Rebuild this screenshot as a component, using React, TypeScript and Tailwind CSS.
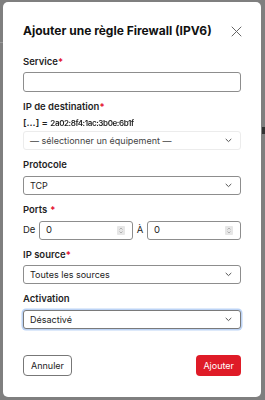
import React from "react";

const font = { fontFamily: "Inter, 'Noto Sans', sans-serif" };

function Chevron() {
  return (
    <svg width="7" height="5" viewBox="0 0 7 5" className="shrink-0">
      <path d="M1 1.2 L3.5 3.6 L6 1.2" fill="none" stroke="#555" strokeWidth="1" strokeLinecap="round" strokeLinejoin="round" />
    </svg>
  );
}

function Spinner() {
  return (
    <div className="w-[8px] h-[9px] rounded-[1px] bg-[#e6e6e6] flex flex-col items-center justify-center gap-[1px]">
      <svg width="4" height="3" viewBox="0 0 4 3">
        <path d="M0.5 2.5 L2 1 L3.5 2.5" fill="none" stroke="#999" strokeWidth="0.7" />
      </svg>
      <svg width="4" height="3" viewBox="0 0 4 3">
        <path d="M0.5 0.5 L2 2 L3.5 0.5" fill="none" stroke="#999" strokeWidth="0.7" />
      </svg>
    </div>
  );
}

function Label({ children, req, space }: { children: React.ReactNode; req?: boolean; space?: boolean }) {
  return (
    <div className="text-[9.5px] leading-[16px] font-semibold text-[#1f1f1f] h-[16px]">
      {children}
      {req && <span className={"text-[#e3001b] " + (space ? "ml-[3px]" : "")}>*</span>}
    </div>
  );
}

function Select({ text, variant }: { text: string; variant?: "disabled" | "focus" }) {
  const cls =
    variant === "disabled"
      ? "border-[#ececec] text-[#444]"
      : variant === "focus"
      ? "border-[#7a7a7a] shadow-[0_0_0_1.5px_#bcd3f5] text-[#222]"
      : "border-[#8d8d8d] text-[#222]";
  return (
    <div className={"h-[19px] rounded-[3px] border bg-white flex items-center justify-between pl-[6px] pr-[8px] text-[9px] " + cls}>
      <span>{text}</span>
      <Chevron />
    </div>
  );
}

export default function App() {
  return (
    <div className="w-[265px] h-[400px] bg-[#7f7f7f] relative overflow-hidden" style={font}>
      <div className="absolute left-0 top-[42px] w-[3px] h-[1px] bg-[#9a9a9a]" />
      <div className="absolute right-0 top-[127px] w-[3px] h-[7px] bg-[#333]" />
      <div className="absolute left-[3px] top-[2px] w-[258px] h-[395px] bg-white rounded-[5px] px-5 pt-5 pb-[21px] flex flex-col">
        <div className="flex items-center justify-between h-[18px]">
          <div className="text-[12px] font-bold text-[#111] leading-[18px]">Ajouter une règle Firewall (IPV6)</div>
          <svg width="11" height="11" viewBox="0 0 11 11" className="mr-[-1px]">
            <path d="M1 1 L10 10 M10 1 L1 10" stroke="#666" strokeWidth="1" strokeLinecap="round" />
          </svg>
        </div>

        <div className="mt-[14px]">
          <Label req>Service</Label>
          <div className="mt-[2px] h-[20px] rounded-[3px] border border-[#8d8d8d] bg-white" />
        </div>

        <div className="mt-[7px]">
          <Label req>IP de destination</Label>
          <div className="h-[16px] text-[9.5px] leading-[16px] font-semibold text-[#1f1f1f] flex items-center">
            <span>[...] =&nbsp;</span>
            <span className="blur-[0.6px] text-[8px] tracking-[-0.4px]">2a02:8f4:1ac:3b0e:6b1f</span>
          </div>
          <Select text="— sélectionner un équipement —" variant="disabled" />
        </div>

        <div className="mt-[7px]">
          <Label>Protocole</Label>
          <div className="mt-[3px]">
            <Select text="TCP" />
          </div>
        </div>

        <div className="mt-[7px]">
          <Label req space>Ports</Label>
          <div className="mt-[3px] flex items-center text-[9.5px] text-[#222]">
            <span className="w-[16px]">De</span>
            <div className="flex-1 h-[19px] rounded-[3px] border border-[#8d8d8d] flex items-center justify-between pl-[6px] pr-[7px]">
              <span>0</span>
              <Spinner />
            </div>
            <span className="w-[14px] text-center">À</span>
            <div className="flex-1 h-[19px] rounded-[3px] border border-[#8d8d8d] flex items-center justify-between pl-[6px] pr-[7px]">
              <span>0</span>
              <Spinner />
            </div>
          </div>
        </div>

        <div className="mt-[7px]">
          <Label req>IP source</Label>
          <div className="mt-[2px]">
            <Select text="Toutes les sources" />
          </div>
        </div>

        <div className="mt-[7px]">
          <Label>Activation</Label>
          <div className="mt-[3px]">
            <Select text="Désactivé" variant="focus" />
          </div>
        </div>

        <div className="mt-auto flex items-center justify-between">
          <button className="h-[21px] px-[7px] rounded-[4px] border border-[#777] bg-white text-[9px] text-[#222]">Annuler</button>
          <button className="h-[21px] px-[7px] rounded-[4px] bg-[#df1b27] text-[9px] text-white">Ajouter</button>
        </div>
      </div>
    </div>
  );
}
